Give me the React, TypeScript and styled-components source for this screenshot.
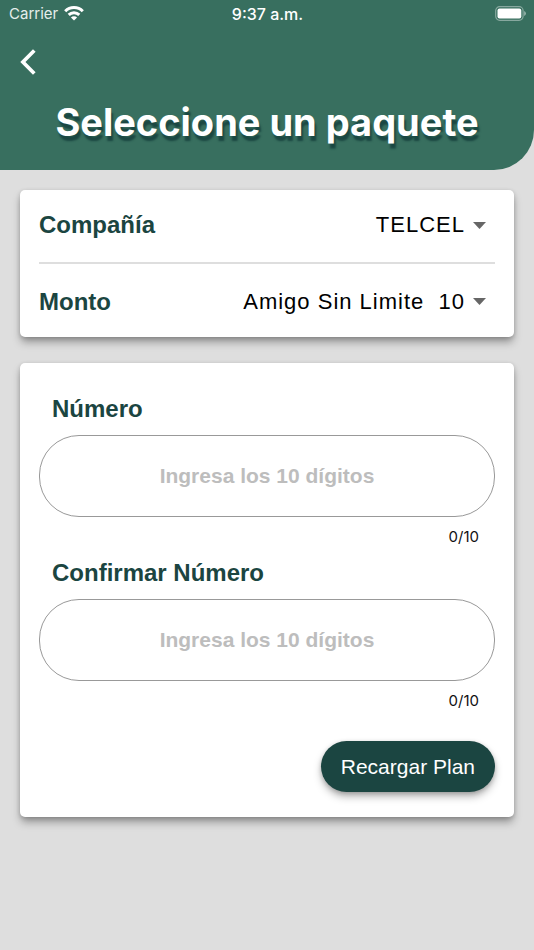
import React, { useId, useState } from "react";
import styled, { createGlobalStyle } from "styled-components";

const GlobalStyle = createGlobalStyle`
  *, *::before, *::after { box-sizing: border-box; }
  body {
    margin: 0;
    background: #dedede;
    font-family: "Liberation Sans", Arial, sans-serif;
  }
`;

const Header = styled.header`
  padding-bottom: 24px;
  background: #386f5f;
  color: #fff;
  border-bottom-right-radius: 40px;
  font-family: Inter, sans-serif;
`;

const StatusBar = styled.div`
  display: grid;
  grid-template-columns: 1fr auto 1fr;
  align-items: center;
  height: 28px;
  padding: 0 8px 0 9px;
  font-size: 15px;
  line-height: 20px;
`;

const Carrier = styled.div`
  display: flex;
  align-items: center;
  gap: 6px;
  color: #e6eeeb;
`;

const Clock = styled.time`
  font-size: 16px;
  font-weight: 500;
`;

const BatteryIcon = styled.svg`
  justify-self: end;
`;

const BackButton = styled.button`
  display: flex;
  align-items: center;
  justify-content: center;
  width: 48px;
  height: 48px;
  margin: 10px 0 0 4px;
  padding: 0;
  border: 0;
  background: none;
  color: #fff;
  cursor: pointer;
`;

const Title = styled.h1`
  margin: 12px 0 0;
  text-align: center;
  font-size: 38px;
  line-height: 48px;
  font-weight: 700;
  text-shadow: 2px 5px 2px #1b4742;
`;

const Content = styled.main`
  display: flex;
  flex-direction: column;
  gap: 26px;
  padding: 20px;
`;

const Card = styled.section`
  padding: 0 19px;
  border-radius: 5px;
  background: #fff;
  box-shadow: 0 6px 8px -1px rgba(0, 0, 0, 0.34), 0 1px 4px rgba(0, 0, 0, 0.16);
`;

const FormCard = styled(Card).attrs({ as: "form" })`
  padding: 32px 19px 25px;
`;

const OptionRow = styled.div`
  display: flex;
  align-items: center;
  justify-content: space-between;
  height: 72px;
  padding-bottom: 2px;
  & + & {
    height: 75px;
    padding: 2px 0 0;
    border-top: 2px solid #dedede;
  }
`;

const Label = styled.label`
  color: #1b4541;
  font-size: 24px;
  line-height: 28px;
  font-weight: 700;
`;

const SelectBox = styled.div`
  position: relative;
  display: flex;
  align-items: center;
`;

const Select = styled.select`
  appearance: none;
  padding: 0 30px 0 0;
  border: 0;
  background: none;
  color: #000;
  font: 22px/28px "Liberation Sans", Arial, sans-serif;
  letter-spacing: 1px;
  text-align-last: right;
  cursor: pointer;
`;

const Caret = styled.svg`
  position: absolute;
  right: 9px;
  pointer-events: none;
`;

const Field = styled.div`
  display: flex;
  flex-direction: column;
  & + & {
    margin-top: 12px;
  }
`;

const FieldLabel = styled(Label)`
  padding-left: 13px;
`;

const PhoneInput = styled.input`
  width: 100%;
  height: 82px;
  margin-top: 12px;
  padding: 0 20px;
  border: 1px solid #999;
  border-radius: 40px;
  background: #fff;
  color: #1b4541;
  font: 700 21px/28px "Liberation Sans", Arial, sans-serif;
  text-align: center;
  &::placeholder {
    color: #bdbdbd;
    opacity: 1;
  }
`;

const Counter = styled.output`
  margin-top: 10px;
  padding-right: 16px;
  text-align: right;
  font-family: Inter, sans-serif;
  font-size: 15px;
  line-height: 20px;
  color: #111;
`;

const Actions = styled.div`
  display: flex;
  justify-content: flex-end;
  margin-top: 30px;
`;

const SubmitButton = styled.button`
  height: 51px;
  padding: 0 20px;
  border: 0;
  border-radius: 26px;
  background: #1b4541;
  color: #fff;
  font: 21px/28px "Liberation Sans", Arial, sans-serif;
  box-shadow: 0 5px 8px -1px rgba(0, 0, 0, 0.34), 0 1px 4px rgba(0, 0, 0, 0.16);
  cursor: pointer;
`;

function OptionSelect({ label, options }: { label: string; options: string[] }) {
  const id = useId();
  return (
    <OptionRow>
      <Label htmlFor={id}>{label}</Label>
      <SelectBox>
        <Select id={id}>
          {options.map((option) => (
            <option key={option}>{option}</option>
          ))}
        </Select>
        <Caret width="13" height="7" viewBox="0 0 13 7" aria-hidden="true">
          <path d="M0 0h13L6.500 7z" fill="#666" />
        </Caret>
      </SelectBox>
    </OptionRow>
  );
}

const DIGITS = 10;

function PhoneField({ label }: { label: string }) {
  const id = useId();
  const [value, setValue] = useState("");
  return (
    <Field>
      <FieldLabel htmlFor={id}>{label}</FieldLabel>
      <PhoneInput
        id={id}
        type="tel"
        maxLength={DIGITS}
        placeholder="Ingresa los 10 dígitos"
        value={value}
        onChange={(e) => setValue(e.target.value.replace(/\D/g, ""))}
      />
      <Counter htmlFor={id}>{`${value.length}/${DIGITS}`}</Counter>
    </Field>
  );
}

export default function App() {
  return (
    <>
      <GlobalStyle />
      <Header>
        <StatusBar>
          <Carrier>
            <span>Carrier</span>
            <svg width="20" height="18" viewBox="0 0 20 18" aria-hidden="true">
              <g fill="none" stroke="#fff" strokeWidth="3">
                <path d="M1.200 6.200a12.500 12.500 0 0 1 17.600 0" />
                <path d="M4.700 9.900a7.600 7.600 0 0 1 10.600 0" />
              </g>
              <path d="M6.900 12.500a4.400 4.400 0 0 1 6.200 0l-3.100 3.100z" fill="#fff" />
            </svg>
          </Carrier>
          <Clock>9:37 a.m.</Clock>
          <BatteryIcon width="31" height="16" viewBox="0 0 31 16" aria-hidden="true">
            <rect x="0.700" y="0.700" width="27.400" height="13.600" rx="4" fill="none" stroke="#fff" strokeOpacity="0.400" strokeWidth="1.200" />
            <rect x="2.500" y="2.500" width="23.800" height="10" rx="2" fill="#fff" />
            <path d="M29.200 5a2.700 2.700 0 0 1 0 5z" fill="#fff" fillOpacity="0.500" />
          </BatteryIcon>
        </StatusBar>
        <BackButton type="button" aria-label="Volver">
          <svg width="16" height="26" viewBox="0 0 16 26" aria-hidden="true">
            <path d="M14.300 1.500L2.900 13L14.300 24.500" fill="none" stroke="currentColor" strokeWidth="3.700" />
          </svg>
        </BackButton>
        <Title>Seleccione un paquete</Title>
      </Header>
      <Content>
        <Card>
          <OptionSelect label="Compañía" options={["TELCEL"]} />
          <OptionSelect label="Monto" options={["Amigo Sin Limite\u00a0 10"]} />
        </Card>
        <FormCard>
          <PhoneField label="Número" />
          <PhoneField label="Confirmar Número" />
          <Actions>
            <SubmitButton type="button">Recargar Plan</SubmitButton>
          </Actions>
        </FormCard>
      </Content>
    </>
  );
}
